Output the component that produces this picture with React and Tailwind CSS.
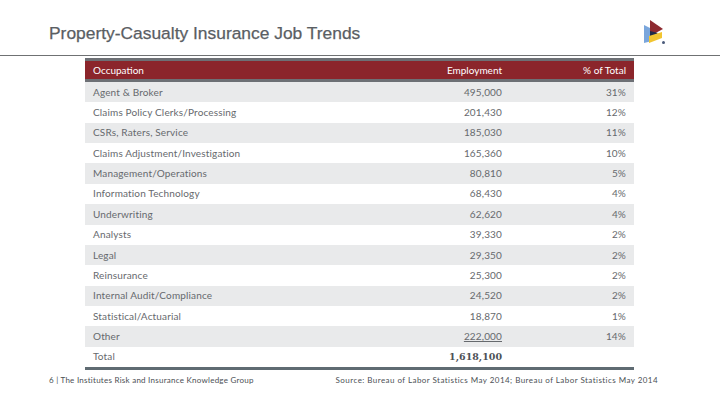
import React from "react";

const rows = [
  ["Agent & Broker", "495,000", "31%"],
  ["Claims Policy Clerks/Processing", "201,430", "12%"],
  ["CSRs, Raters, Service", "185,030", "11%"],
  ["Claims Adjustment/Investigation", "165,360", "10%"],
  ["Management/Operations", "80,810", "5%"],
  ["Information Technology", "68,430", "4%"],
  ["Underwriting", "62,620", "4%"],
  ["Analysts", "39,330", "2%"],
  ["Legal", "29,350", "2%"],
  ["Reinsurance", "25,300", "2%"],
  ["Internal Audit/Compliance", "24,520", "2%"],
  ["Statistical/Actuarial", "18,870", "1%"],
  ["Other", "222,000", "14%"],
];

function Logo() {
  return (
    <svg width="26" height="28" viewBox="0 0 26 28">
      <polygon points="2,6 10,10 10,22 2,24" fill="#7aa6dc" />
      <polygon points="8,1 21,10 8,17" fill="#8e2a30" />
      <polygon points="8,12 16,14 8,20" fill="#1f2a4a" />
      <polygon points="7,17 20,13 20,19 7,24" fill="#f2c531" />
      <polygon points="7,20 13,18 7,24" fill="#f2c531" />
      <circle cx="21.5" cy="23.5" r="1.5" fill="#4a5a7a" />
    </svg>
  );
}

export default function App() {
  return (
    <div className="w-[720px] h-[405px] bg-white relative overflow-hidden" style={{ fontFamily: "'Liberation Sans', Arial, sans-serif" }}>
      <div className="h-[56px] border-b border-[#6f7173] flex items-start justify-between pl-[49px] pr-[52px]">
        <div className="pt-[20px] text-[17.4px] text-[#5a5e63] [-webkit-text-stroke:0.25px_#5a5e63]">Property-Casualty Insurance Job Trends</div>
        <div className="pt-[19px]"><Logo /></div>
      </div>
      <div className="ml-[85px] w-[549px] mt-[2px] text-[10px] text-[#66696d]" style={{ fontFamily: "Lato, 'Open Sans', sans-serif" }}>
        <div className="h-[3px] bg-[#6d7075]" />
        <div className="h-[18px] bg-[#8b252b] text-white grid grid-cols-[1fr_100px_124px] items-center">
          <div className="pl-[8px]">Occupation</div>
          <div className="text-right pr-[8px]">Employment</div>
          <div className="text-right pr-[8px]">% of Total</div>
        </div>
        <div className="h-[3px] bg-[#6d7075]" />
        {rows.map((r, i) => (
          <div key={i} className={`h-[20.36px] grid grid-cols-[1fr_100px_124px] items-center tracking-[0.15px] ${i % 2 === 0 ? "bg-[#e9eaeb]" : "bg-white"}`}>
            <div className="pl-[8px]">{r[0]}</div>
            <div className={`text-right pr-[8px] ${r[0] === "Other" ? "underline" : ""}`}>{r[1]}</div>
            <div className="text-right pr-[8px]">{r[2]}</div>
          </div>
        ))}
        <div className="h-[20.36px] grid grid-cols-[1fr_100px_124px] items-center bg-white">
          <div className="pl-[8px] tracking-[0.15px]">Total</div>
          <div className="text-right pr-[8px] font-bold text-[#4d5156] text-[9.5px]" style={{ fontFamily: "'DejaVu Serif', serif" }}>1,618,100</div>
          <div />
        </div>
        <div className="h-[3px] bg-[#5f6b72]" />
      </div>
      <div className="flex justify-between items-center pl-[49px] pr-[62px] mt-[4px] text-[#4b4f54]" style={{ fontFamily: "Lato, sans-serif" }}>
        <div className="text-[8px] tracking-[0.25px]">6 | The Institutes Risk and Insurance Knowledge Group</div>
        <div className="text-[8px] tracking-[0.45px]">Source: Bureau of Labor Statistics May 2014; Bureau of Labor Statistics May 2014</div>
      </div>
    </div>
  );
}
